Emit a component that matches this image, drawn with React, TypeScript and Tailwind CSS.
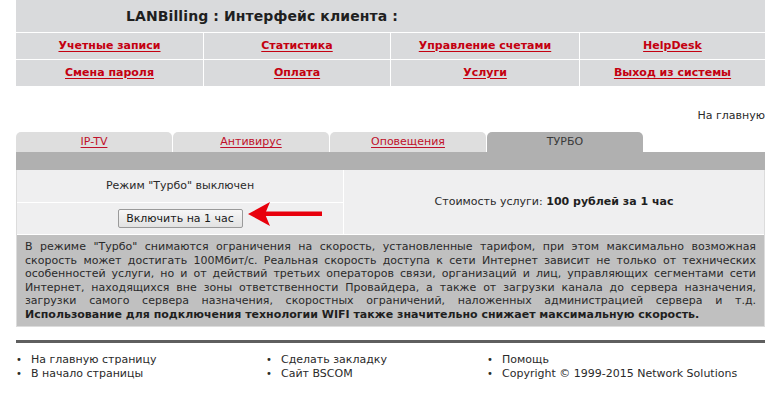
import React from "react";

const navRows = [
  ["Учетные записи", "Статистика", "Управление счетами", "HelpDesk"],
  ["Смена пароля", "Оплата", "Услуги", "Выход из системы"],
];

export default function App() {
  return (
    <div className="w-[781px] h-[398px] bg-white overflow-hidden font-['DejaVu_Sans',Verdana,sans-serif] text-[11px] text-[#2a2a2a]">
      <div className="ml-[16px] w-[749px]">
        {/* Header */}
        <div className="h-[32px] bg-[#d9dadc] flex items-center pl-[110px]">
          <span className="text-[14px] font-bold text-[#1f1f1f] tracking-[0.1px]">LANBilling : Интерфейс клиента :</span>
        </div>
        {/* Nav */}
        <div className="grid grid-cols-[187px_186px_188px_185px] gap-[1px] bg-white pt-[1px]">
          {navRows.flat().map((t) => (
            <div key={t} className="h-[26px] bg-[#d9dadc] flex items-center justify-center">
              <a className="font-bold text-[#c40010] underline underline-offset-[2px]">{t}</a>
            </div>
          ))}
        </div>

        <div className="mt-[23px] text-right leading-[14px] text-[#2a2a2a]">На главную</div>

        {/* Tabs */}
        <div className="mt-[9px] flex gap-[1px]">
          {["IP-TV", "Антивирус", "Оповещения"].map((t) => (
            <div key={t} className="w-[156px] h-[20px] rounded-t-[5px] bg-[#dedede] flex items-center justify-center pt-[1px]">
              <a className="text-[#c0102a] underline underline-offset-[2px]">{t}</a>
            </div>
          ))}
          <div className="w-[156px] h-[20px] rounded-t-[5px] bg-[#b0b0b0] flex items-center justify-center pt-[1px] text-[#3a3a3a]">
            ТУРБО
          </div>
        </div>
        <div className="h-[18px] bg-[#b0b0b0]" />

        {/* Content */}
        <div className="relative border-l border-r border-[#dcdcdc]">
          <div className="flex bg-white gap-[1px]">
            <div className="w-[326px] flex flex-col gap-[1px]">
              <div className="h-[32px] bg-[#efeff0] flex items-center justify-center pt-[1px]">Режим "Турбо" выключен</div>
              <div className="h-[31px] bg-[#efeff0] flex items-center justify-center">
                <button className="w-[125px] h-[19px] border border-[#9a9a9a] rounded-[2px] bg-gradient-to-b from-[#f7f7f7] to-[#e2e2e2] text-[11px] text-[#1a1a1a] leading-none">
                  Включить на 1 час
                </button>
              </div>
            </div>
            <div className="flex-1 bg-[#efeff0] flex items-center justify-center">
              <span>
                Стоимость услуги: <b className="text-[#1f1f1f]">100 рублей за 1 час</b>
              </span>
            </div>
          </div>
          <svg className="absolute left-[231px] top-[30px]" width="76" height="28" viewBox="0 0 76 28">
            <path d="M16 11.5 L74 11.5 L74 16 L16 16 Z" fill="#e8000c" />
            <path d="M0 14 L22 2 L17 14 L22 26 Z" fill="#e8000c" />
          </svg>
          <div className="bg-[#c0c0c0] border-t border-white px-[8px] pt-[5px] pb-[4px] leading-[13.6px] text-justify text-[#2a2a2a] border-b border-b-[#dcdcdc]">
            В режиме "Турбо" снимаются ограничения на скорость, установленные тарифом, при этом максимально возможная скорость может достигать 100Мбит/с. Реальная скорость доступа к сети Интернет зависит не только от технических особенностей услуги, но и от действий третьих операторов связи, организаций и лиц, управляющих сегментами сети Интернет, находящихся вне зоны ответственности Провайдера, а также от загрузки канала до сервера назначения, загрузки самого сервера назначения, скоростных ограничений, наложенных администрацией сервера и т.д.{" "}
            <b className="text-[#1f1f1f]">Использование для подключения технологии WIFI также значительно снижает максимальную скорость.</b>
          </div>
        </div>

        {/* Footer */}
        <div className="mt-[13px] h-[3px] bg-[#5f5f5f]" />
        <div className="mt-[10px] flex leading-[14px] text-[#2a2a2a]">
          {[
            ["На главную страницу", "В начало страницы"],
            ["Сделать закладку", "Сайт BSCOM"],
            ["Помощь", "Copyright © 1999-2015 Network Solutions"],
          ].map((col, i) => (
            <div key={i} className={i === 0 ? "w-[250px]" : i === 1 ? "w-[221px]" : "flex-1"}>
              {col.map((t) => (
                <div key={t} className="flex">
                  <span className="w-[15px] text-[10px]">•</span>
                  <span>{t}</span>
                </div>
              ))}
            </div>
          ))}
        </div>
      </div>
    </div>
  );
}
